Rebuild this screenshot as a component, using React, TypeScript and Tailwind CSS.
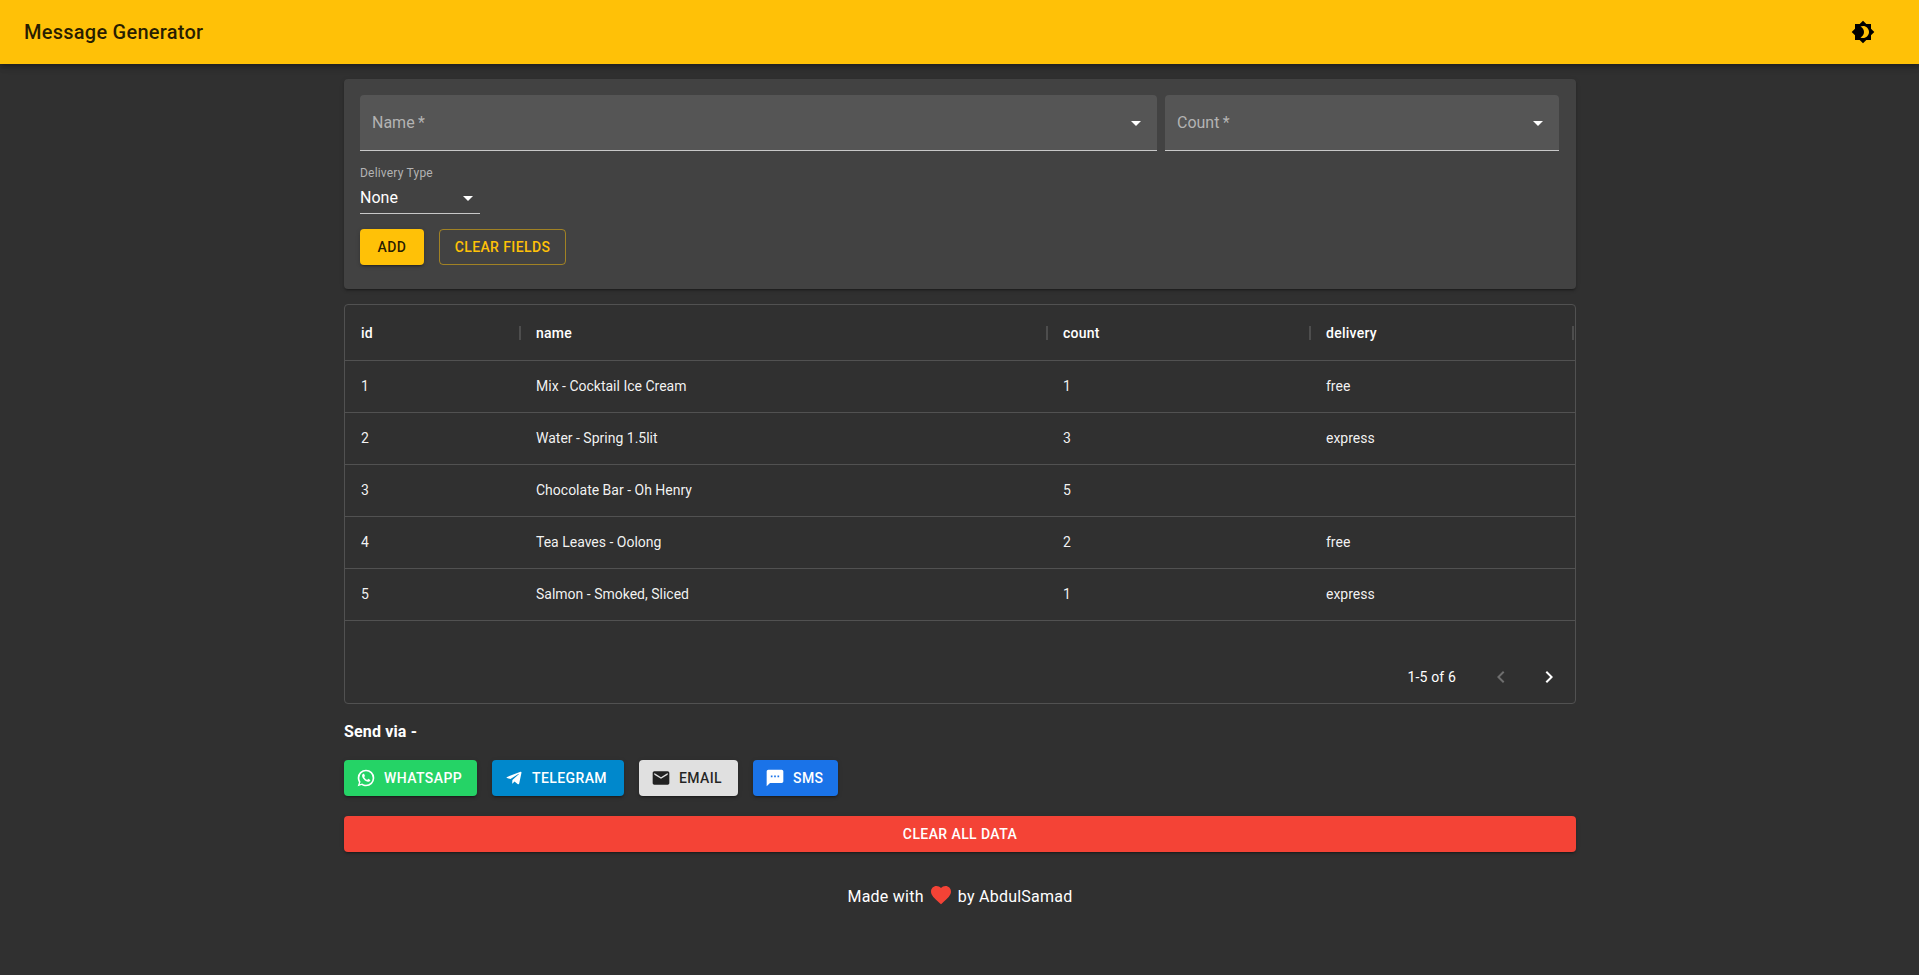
import React from 'react';
import { MdBrightness4, MdArrowDropDown, MdChevronLeft, MdChevronRight, MdEmail, MdSms, MdFavorite } from 'react-icons/md';

const rows = [
  { id: 1, name: 'Mix - Cocktail Ice Cream', count: 1, delivery: 'free' },
  { id: 2, name: 'Water - Spring 1.5lit', count: 3, delivery: 'express' },
  { id: 3, name: 'Chocolate Bar - Oh Henry', count: 5, delivery: '' },
  { id: 4, name: 'Tea Leaves - Oolong', count: 2, delivery: 'free' },
  { id: 5, name: 'Salmon - Smoked, Sliced', count: 1, delivery: 'express' },
];

const WhatsAppIcon = () => (
  <svg viewBox="0 0 24 24" className="w-5 h-5 fill-current">
    <path d="M16.75 13.96c.25.13.41.2.46.3.06.11.04.61-.21 1.18-.2.56-1.24 1.1-1.7 1.12-.46.02-.47.36-2.96-.73-2.49-1.09-3.99-3.75-4.11-3.92-.12-.17-.96-1.38-.92-2.61.05-1.22.69-1.8.95-2.04.24-.26.51-.29.68-.26h.47c.15 0 .36-.06.55.45l.69 1.87c.06.13.1.28.01.44l-.27.41-.39.42c-.12.12-.26.25-.12.5.12.26.62 1.09 1.32 1.78.91.88 1.71 1.17 1.95 1.3.24.14.39.12.54-.04l.81-.94c.19-.25.35-.19.58-.11l1.67.88M12 2a10 10 0 0 1 10 10 10 10 0 0 1-10 10c-1.97 0-3.8-.57-5.35-1.55L2 22l1.55-4.65A9.969 9.969 0 0 1 2 12 10 10 0 0 1 12 2m0 2a8 8 0 0 0-8 8c0 1.72.54 3.31 1.46 4.61L4.5 19.5l2.89-.96A7.95 7.95 0 0 0 12 20a8 8 0 0 0 8-8 8 8 0 0 0-8-8z" />
  </svg>
);

const TelegramIcon = () => (
  <svg viewBox="0 0 24 24" className="w-5 h-5 fill-current">
    <path d="M9.78 18.65l.28-4.23 7.68-6.92c.34-.31-.07-.46-.52-.19L7.74 13.3 3.64 12c-.88-.25-.89-.86.2-1.3l15.97-6.16c.73-.33 1.43.18 1.15 1.3l-2.72 12.81c-.19.91-.74 1.13-1.5.71L12.6 16.3l-1.99 1.93c-.23.23-.42.42-.83.42z" />
  </svg>
);

const shadow = 'shadow-[0_3px_1px_-2px_rgba(0,0,0,0.2),0_2px_2px_0_rgba(0,0,0,0.14),0_1px_5px_0_rgba(0,0,0,0.12)]';

const SendButton = ({ className, icon, label }: { className: string; icon: React.ReactNode; label: string }) => (
  <button className={`h-9 pl-3 rounded flex items-center gap-2 text-sm font-medium tracking-[0.4px] ${shadow} ${className}`}>
    {icon}
    {label}
  </button>
);

const FilledSelect = ({ label, className }: { label: string; className: string }) => (
  <div className={`h-14 bg-[#555555] rounded-t border-b border-[#c8c8c8] flex items-center justify-between pl-3 pr-[9px] ${className}`}>
    <span className="text-base text-[#b3b3b3]">{label}{'\u2009'}*</span>
    <MdArrowDropDown className="w-6 h-6 text-white" />
  </div>
);

export default function App() {
  return (
    <div className="min-h-screen bg-[#303030] text-white font-['Roboto',sans-serif]">
      {/* App bar */}
      <header className="h-16 bg-[#ffc107] flex items-center justify-between pl-6 pr-11 shadow-[0_2px_4px_-1px_rgba(0,0,0,0.2),0_4px_5px_0_rgba(0,0,0,0.14),0_1px_10px_0_rgba(0,0,0,0.12)]">
        <h1 className="text-xl font-medium text-black/85 tracking-[0.25px]">Message Generator</h1>
        <MdBrightness4 className="w-6 h-6 text-black" />
      </header>

      <main className="w-[1232px] ml-[344px] pt-[15px]">
        {/* Form */}
        <section className={`bg-[#424242] rounded p-4 h-[210px] ${shadow}`}>
          <div className="flex gap-2">
            <FilledSelect label="Name" className="w-[797px]" />
            <FilledSelect label="Count" className="w-[394px]" />
          </div>
          <div className="mt-[15px] w-[120px]">
            <div className="text-xs leading-[14px] tracking-[0.2px] text-[#b3b3b3]">Delivery Type</div>
            <div className="h-[32px] mt-[2px] border-b border-[#c8c8c8] flex items-center justify-between">
              <span className="text-base">None</span>
              <MdArrowDropDown className="w-6 h-6 text-white" />
            </div>
          </div>
          <div className="flex gap-[15px] mt-[15px]">
            <button className={`w-16 h-9 rounded bg-[#ffc107] text-black/85 text-sm font-medium tracking-[0.4px] ${shadow}`}>ADD</button>
            <button className="w-[127px] h-9 rounded border border-[#ffc107]/50 text-[#ffc107] text-sm font-medium tracking-[0.4px]">CLEAR FIELDS</button>
          </div>
        </section>

        {/* Table */}
        <section className="mt-[15px] h-[400px] border border-[#515151] rounded text-sm">
          <div className="grid grid-cols-[175px_527px_263px_263px] h-[56px] border-b border-[#515151] font-medium tracking-[0.25px]">
            {['id', 'name', 'count', 'delivery'].map((col) => (
              <div key={col} className="flex items-center justify-between pl-4">
                <span>{col}</span>
                <span className="w-[2px] h-[14px] -mr-[1px] bg-[#4d4d4d]" />
              </div>
            ))}
          </div>
          {rows.map((row) => (
            <div key={row.id} className="grid grid-cols-[175px_527px_263px_263px] h-[52px] pb-[2px] border-b border-[#515151] items-center text-white/95">
              <div className="pl-4">{row.id}</div>
              <div className="pl-4">{row.name}</div>
              <div className="pl-4">{row.count}</div>
              <div className="pl-4">{row.delivery}</div>
            </div>
          ))}
          <div className="h-[82px] flex items-center justify-end pt-[30px] pr-[14px]">
            <span className="tracking-[0.15px]">1-5 of 6</span>
            <MdChevronLeft className="w-6 h-6 ml-[33px] text-white/30" />
            <MdChevronRight className="w-6 h-6 ml-6 text-white" />
          </div>
        </section>

        {/* Send */}
        <h2 className="mt-4 text-base font-bold leading-6 tracking-[0.15px]">Send via -</h2>
        <div className="flex gap-[15px] mt-4">
          <SendButton className="bg-[#25d366] text-white w-[133px]" icon={<WhatsAppIcon />} label="WHATSAPP" />
          <SendButton className="bg-[#0088cc] text-white w-[132px]" icon={<TelegramIcon />} label="TELEGRAM" />
          <SendButton className="bg-[#e0e0e0] text-black/85 w-[99px]" icon={<MdEmail className="w-5 h-5" />} label="EMAIL" />
          <SendButton className="bg-[#1a73e8] text-white w-[85px]" icon={<MdSms className="w-5 h-5" />} label="SMS" />
        </div>
        <button className={`w-full h-9 mt-5 rounded bg-[#f44336] text-sm font-medium tracking-[0.4px] ${shadow}`}>CLEAR ALL DATA</button>

        {/* Footer */}
        <footer className="mt-[33px] flex items-center justify-center text-base tracking-[0.25px]">
          Made with
          <MdFavorite className="w-6 h-6 mx-[5px] -mt-[5px] text-[#f44336]" />
          by AbdulSamad
        </footer>
      </main>
    </div>
  );
}
